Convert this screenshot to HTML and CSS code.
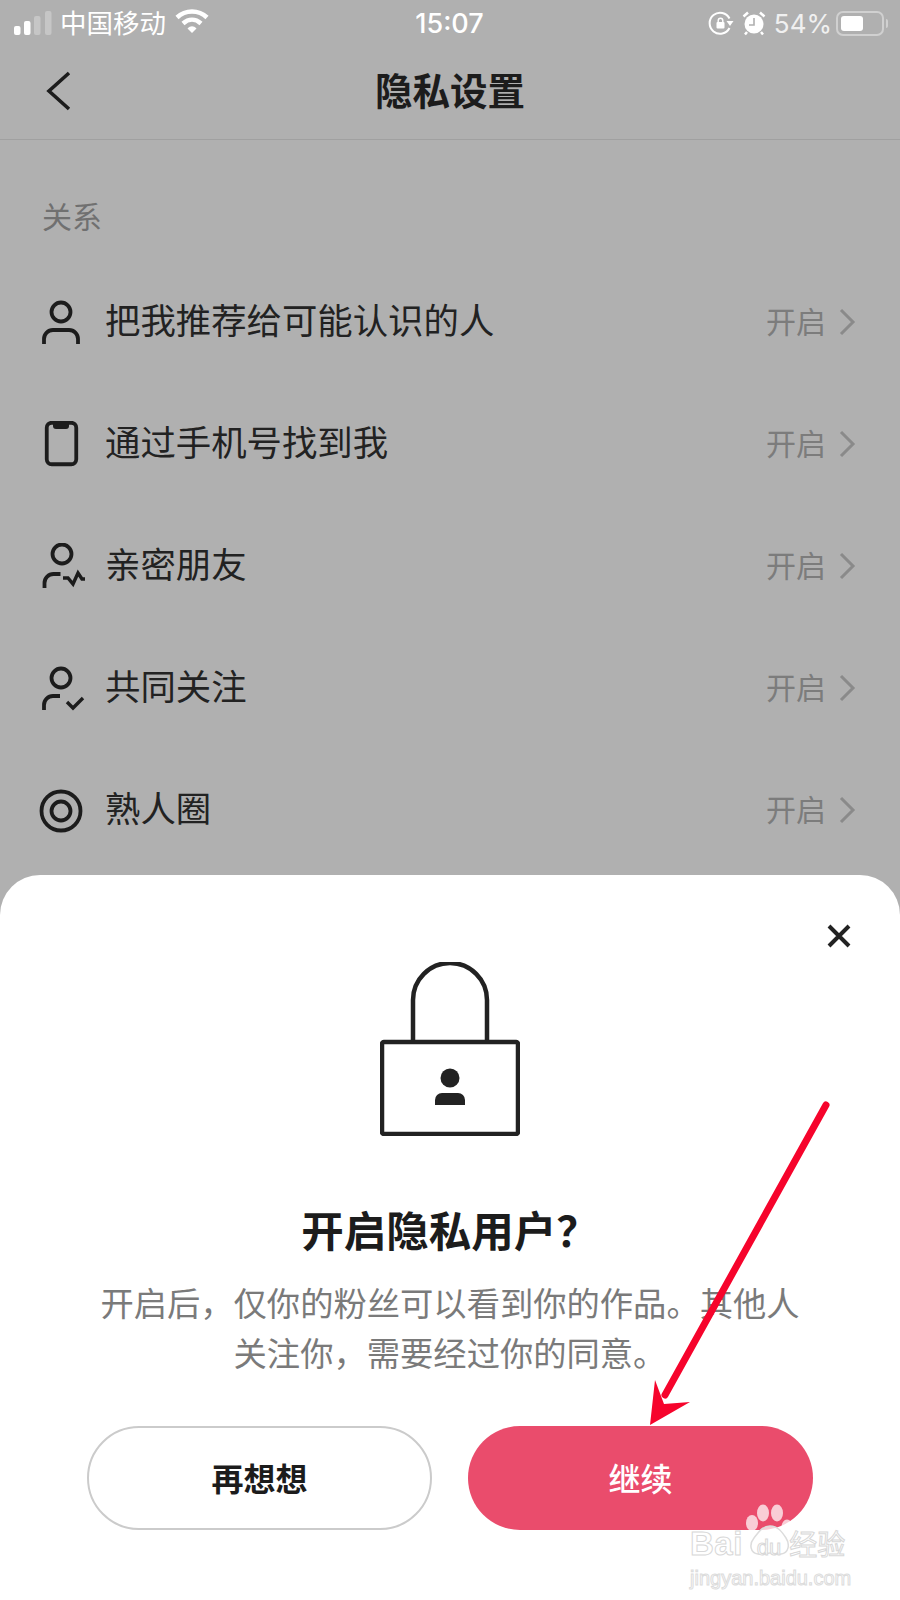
FILE: index.html
```html
<!DOCTYPE html>
<html lang="zh">
<head>
<meta charset="utf-8">
<title>隐私设置</title>
<link rel="stylesheet" href="styles.css">
</head>
<body>
<div class="page">
  <header class="status">
    <div class="status-left">
      <svg class="signal" viewBox="0 0 38 24" width="38" height="24"><rect x="0" y="15" width="6.500" height="9" rx="2" fill="#fff"/><rect x="10" y="10" width="6.500" height="14" rx="2" fill="#fff"/><rect x="20" y="5" width="6.500" height="19" rx="2" fill="#c6c6c6"/><rect x="31" y="0" width="6.500" height="24" rx="2" fill="#c6c6c6"/></svg>
      <span class="carrier">中国移动</span>
      <svg viewBox="0 0 34 26" width="34" height="26" class="wifi"><path d="M2 9.500C10.500 1.500 23.500 1.500 32 9.500" fill="none" stroke="#fff" stroke-width="4.500"/><path d="M8 15.500C13.500 10.500 20.500 10.500 26 15.500" fill="none" stroke="#fff" stroke-width="4.500"/><path d="M12.500 20.500C15.500 17.500 18.500 17.500 21.500 20.500L17 25Z" fill="#fff"/></svg>
    </div>
    <div class="time">15:07</div>
    <div class="status-right">
      <svg viewBox="0 0 26 26" width="26" height="26"><path d="M21.500 8.500A10.500 10.500 0 1 0 21.500 18" fill="none" stroke="#fff" stroke-width="2"/><path d="M18.500 11h7l-3.500 5z" fill="#fff"/><rect x="8.500" y="12" width="8" height="6.500" rx="1" fill="#fff"/><path d="M10.200 12v-1.500a2.300 2.300 0 0 1 4.600 0V12" fill="none" stroke="#fff" stroke-width="1.400"/></svg>
      <svg viewBox="0 0 24 26" width="24" height="26"><circle cx="12" cy="14" r="9.500" fill="#fff"/><path d="M1.500 6.500 6 2.500M22.500 6.500 18 2.500M5 22l-2 2.500M19 22l2 2.500" stroke="#fff" stroke-width="2.500" fill="none"/><path d="M12 8v7H7" stroke="#b0b0b0" stroke-width="1.600" fill="none"/></svg>
      <span class="battery-pct">54%</span>
      <div class="battery"><div class="battery-shell"><div class="battery-fill"></div></div><div class="battery-cap"></div></div>
    </div>
  </header>

  <nav class="nav">
    <svg class="back" viewBox="0 0 28 42" width="28" height="42"><path d="M25 3 5 21l20 18" fill="none" stroke="#1c1c1c" stroke-width="3.600"/></svg>
    <h1 class="nav-title">隐私设置</h1>
  </nav>

  <main class="settings">
    <div class="section-label">关系</div>

    <div class="row">
      <svg class="row-icon" viewBox="0 0 48 48"><circle cx="24" cy="13" r="9.500" class="ln"/><path d="M7 45v-5a9 9 0 0 1 9-9h16a9 9 0 0 1 9 9v5" class="ln"/></svg>
      <span class="row-text">把我推荐给可能认识的人</span>
      <span class="row-value">开启</span>
      <svg class="chev" viewBox="0 0 18 30"><path d="M3 3l12 12L3 27" fill="none" stroke="#8a8a8a" stroke-width="3"/></svg>
    </div>
    <div class="row">
      <svg class="row-icon" viewBox="0 0 48 48"><rect x="9.750" y="1.750" width="29.500" height="41.500" rx="5" class="ln"/><path d="M16 2h16v3a3 3 0 0 1-3 3H19a3 3 0 0 1-3-3z" fill="#1c1c1c"/></svg>
      <span class="row-text">通过手机号找到我</span>
      <span class="row-value">开启</span>
      <svg class="chev" viewBox="0 0 18 30"><path d="M3 3l12 12L3 27" fill="none" stroke="#8a8a8a" stroke-width="3"/></svg>
    </div>
    <div class="row">
      <svg class="row-icon" viewBox="0 0 48 48"><circle cx="25" cy="11" r="9.500" class="ln"/><path d="M7.500 45v-5a9 9 0 0 1 9-9h7" class="ln"/><path d="M26 35h5l5 6 5-11 4 6h3" class="ln thin"/></svg>
      <span class="row-text">亲密朋友</span>
      <span class="row-value">开启</span>
      <svg class="chev" viewBox="0 0 18 30"><path d="M3 3l12 12L3 27" fill="none" stroke="#8a8a8a" stroke-width="3"/></svg>
    </div>
    <div class="row">
      <svg class="row-icon" viewBox="0 0 48 48"><circle cx="24" cy="13" r="9.500" class="ln"/><path d="M7 45v-5a9 9 0 0 1 9-9h7" class="ln"/><path d="M30 37l6 6 10-10" class="ln thin"/></svg>
      <span class="row-text">共同关注</span>
      <span class="row-value">开启</span>
      <svg class="chev" viewBox="0 0 18 30"><path d="M3 3l12 12L3 27" fill="none" stroke="#8a8a8a" stroke-width="3"/></svg>
    </div>
    <div class="row">
      <svg class="row-icon" viewBox="0 0 48 48"><circle cx="24" cy="24" r="19.500" class="ln"/><circle cx="24" cy="24" r="9.500" class="ln"/></svg>
      <span class="row-text">熟人圈</span>
      <span class="row-value">开启</span>
      <svg class="chev" viewBox="0 0 18 30"><path d="M3 3l12 12L3 27" fill="none" stroke="#8a8a8a" stroke-width="3"/></svg>
    </div>
  </main>

  <section class="sheet">
    <svg class="close" viewBox="0 0 26 26" width="26" height="26"><path d="M3 3l20 20M23 3 3 23" stroke="#222" stroke-width="4" fill="none"/></svg>
    <svg class="lock" viewBox="0 0 140 174" width="140" height="174"><path d="M33 80V38a37 37 0 0 1 74 0v42" fill="none" stroke="#222" stroke-width="4.500"/><rect x="2" y="80" width="136" height="92" rx="2" fill="none" stroke="#222" stroke-width="4.500"/><circle cx="70" cy="116" r="9.500" fill="#222"/><path d="M55 143v-5a7 7 0 0 1 7-7h16a7 7 0 0 1 7 7v5z" fill="#222"/></svg>
    <h2 class="sheet-title">开启隐私用户&#xFF1F;</h2>
    <p class="sheet-body">开启后&#xFF0C;仅你的粉丝可以看到你的作品。其他人<br>关注你&#xFF0C;需要经过你的同意。</p>
    <div class="actions">
      <button class="btn btn-ghost">再想想</button>
      <button class="btn btn-primary">继续</button>
    </div>
  </section>

  <svg class="arrow" viewBox="0 0 900 1600" width="900" height="1600"><path d="M826 1105 665 1395" stroke="#f6042c" stroke-width="7" stroke-linecap="round" fill="none"/><path d="M650 1425 655 1380 664 1404 690 1402z" fill="#f6042c"/></svg>

  <div class="mark">
    <svg class="paw" viewBox="0 0 60 60" width="60" height="60"><ellipse cx="12" cy="23" rx="6" ry="8" fill="#fff" fill-opacity=".72"/><ellipse cx="23" cy="13" rx="6" ry="8.500" fill="#fff" fill-opacity=".72"/><ellipse cx="37" cy="13" rx="6" ry="8.500" fill="#fff" fill-opacity=".72"/><ellipse cx="47" cy="27" rx="5.500" ry="7.500" fill="#fff" fill-opacity=".72"/><path d="M30 26c8 0 12 6 16 12 4 6 3 15-5 16-4 1-8-1-11-1s-8 2-12 1c-8-1-9-10-4-16 4-5 8-12 16-12z" fill="#fff" fill-opacity=".72" stroke="#dcdcdc" stroke-width="1.500"/></svg>
    <div class="mark-main"><span class="mark-bai">Bai</span><span class="mark-du">du</span><span class="mark-cn">经验</span></div>
    <div class="mark-url">jingyan.baidu.com</div>
  </div>
</div>
</body>
</html>
```

FILE: styles.css
```css
* { box-sizing: border-box; }
html, body { margin: 0; padding: 0; }
body { width: 900px; height: 1600px; overflow: hidden; font-family: "Noto Sans CJK SC", "Noto Sans", sans-serif; }
.page { position: relative; width: 900px; height: 1600px; background: #b0b0b0; overflow: hidden; }

.status { display: grid; grid-template-columns: 1fr auto 1fr; align-items: center; height: 46px; padding: 0 12px 0 14px; color: #fff; font-size: 26px; }
.status-left { display: flex; align-items: center; gap: 8px; }
.signal { margin-top: -1px; }
.carrier { line-height: 1; font-size: 26.500px; margin-bottom: 1px; }
.wifi { margin-left: 1px; margin-top: -4px; }
.time { font-family: "Inter", sans-serif; font-weight: 500; font-size: 27px; margin-left: -3px; }
.status-right { display: flex; align-items: center; justify-content: flex-end; gap: 8px; }
.battery-pct { font-family: "Inter", sans-serif; font-size: 26px; color: #f0f0f0; }
.battery { display: flex; align-items: center; gap: 2px; margin-left: -4px; }
.battery-shell { width: 48px; height: 25px; padding: 3px; border: 2px solid #d0d0d0; border-radius: 7px; }
.battery-fill { width: 22px; height: 100%; background: #fff; border-radius: 3px; }
.battery-cap { width: 2px; height: 9px; background: #d0d0d0; border-radius: 0 2px 2px 0; }

.nav { display: flex; align-items: center; justify-content: center; position: relative; height: 94px; border-bottom: 1px solid #a0a0a0; }
.back { position: absolute; left: 44px; top: 24px; }
.nav-title { margin: 0 0 8px; font-size: 37.500px; line-height: 1; font-weight: 700; color: #1c1c1c; }

.settings { display: flex; flex-direction: column; }
.section-label { height: 122px; padding: 54px 0 0 42px; font-size: 30px; line-height: 42px; color: #707070; }
.row { display: flex; align-items: center; height: 122px; padding: 0 44px 0 37px; }
.row-icon { width: 48px; height: 48px; flex: none; }
.ln { fill: none; stroke: #1c1c1c; stroke-width: 3.800; }
.thin { stroke-width: 3.400; }
.row-text { flex: 1; margin: 0 0 8px 20px; font-size: 35.400px; line-height: 1; color: #222; }
.row-value { margin-bottom: 6px; font-size: 30px; line-height: 1; color: #7c7c7c; }
.chev { width: 18px; height: 30px; margin: 0 0 3px 12px; flex: none; }

.sheet { position: absolute; left: 0; right: 0; bottom: 0; height: 725px; background: #fff; border-radius: 40px 40px 0 0; display: flex; flex-direction: column; align-items: center; padding-top: 87px; }
.close { position: absolute; right: 48px; top: 48px; }
.lock { flex: none; }
.sheet-title { margin: 65px 0 0; font-size: 42.500px; line-height: 56px; font-weight: 700; color: #1c1c1c; }
.sheet-body { margin: 20px 0 0; font-size: 33.300px; line-height: 50px; color: #7a7a7a; text-align: center; }
.actions { display: flex; gap: 36px; margin-top: 49px; }
.btn { width: 345px; height: 104px; border-radius: 52px; font-family: inherit; font-size: 32px; line-height: 1; padding: 0 0 2px; }
.btn-ghost { background: #fff; border: 2.500px solid #cbcbcb; color: #1c1c1c; font-weight: 700; }
.btn-primary { background: #ea4c6c; border: 0; color: #fff; font-weight: 500; }

.arrow { position: absolute; left: 0; top: 0; pointer-events: none; }

.mark { position: absolute; left: 690px; top: 1525px; width: 170px; color: #fff; }
.paw { position: absolute; left: 50px; top: -25px; }
.mark-main { position: relative; display: flex; align-items: baseline; font-family: "Liberation Sans", sans-serif; line-height: 36px; color: #fff; -webkit-text-stroke: 1px #d8d8d8; }
.mark-bai { font-size: 33px; font-weight: 700; letter-spacing: 0.500px; }
.mark-du { font-size: 22px; margin-left: 14px; }
.mark-cn { font-family: "Noto Sans CJK SC", sans-serif; font-size: 28px; margin-left: 8px; }
.mark-url { position: relative; font-family: "Liberation Sans", sans-serif; font-size: 20px; line-height: 24px; color: #fff; -webkit-text-stroke: 1px #dcdcdc; }
```
